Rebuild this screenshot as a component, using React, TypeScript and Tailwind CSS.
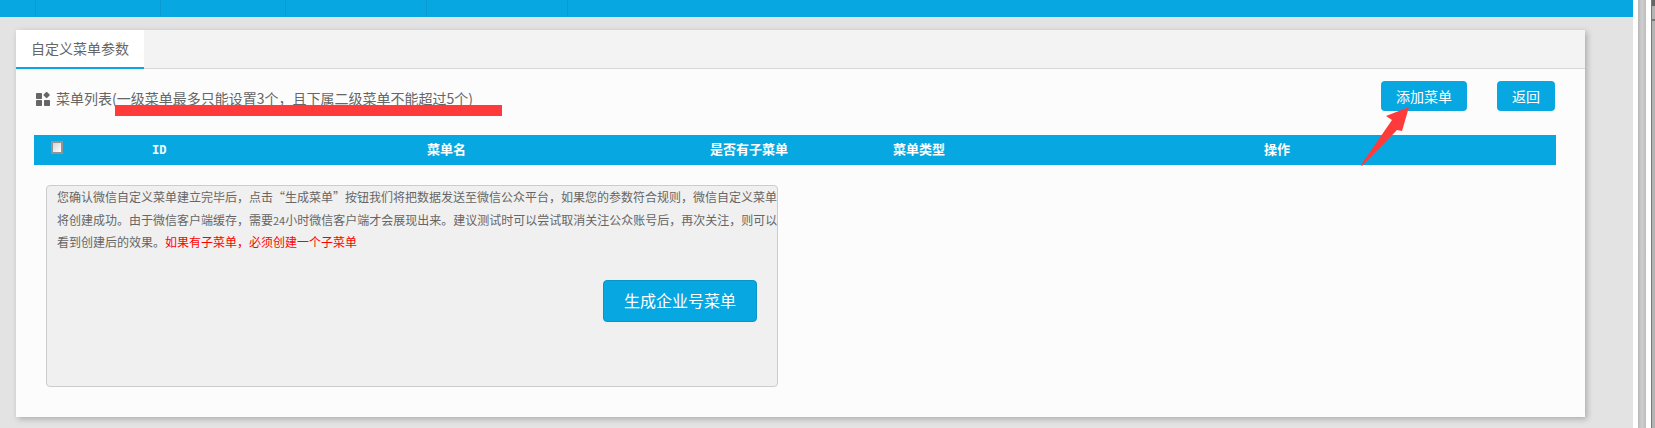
export default function App() {
  const font = { fontFamily: '"Noto Sans CJK SC", "Liberation Sans", sans-serif' };
  return (
    <div className="flex h-[428px] w-[1655px] overflow-hidden bg-white" style={font}>
      <div className="flex w-[1633px] flex-col bg-[#e3e3e3]">
        <div className="flex h-[17px] shrink-0 bg-[#07a8e1]">
          <div className="w-[36px] border-r border-[#0a9bd3]" />
          <div className="w-[125px] border-r border-[#0a9bd3]" />
          <div className="w-[125px] border-r border-[#0a9bd3]" />
          <div className="w-[141px] border-r border-[#0a9bd3]" />
          <div className="w-[141px] border-r border-[#0a9bd3]" />
        </div>
        <div className="ml-[16px] mt-[13px] flex h-[387px] w-[1569px] flex-col bg-[#fcfcfc] shadow-[2px_2px_6px_rgba(0,0,0,0.25)]">
          <div className="flex h-[39px] shrink-0 border-b border-[#d8d8d8] bg-[#f3f3f3]">
            <div className="flex h-[39px] w-[128px] items-center justify-center border-b-2 border-[#07a8e1] bg-white text-[14px] text-[#666]">自定义菜单参数</div>
          </div>
          <div className="relative flex flex-1 flex-col px-[18px]">
            <div className="flex h-[66px] shrink-0 items-start pt-[12px]">
              <div className="flex items-center pt-[7px] text-[14px] text-[#666]">
                <svg width="14" height="14" viewBox="0 0 14 14" className="mr-[6px] ml-[2px]" fill="#666">
                  <rect x="0" y="1" width="6" height="6" rx="0.8" />
                  <rect x="8.2" y="0.6" width="4.8" height="4.8" rx="0.6" transform="rotate(45 10.6 3)" />
                  <rect x="0" y="8" width="6" height="6" rx="0.8" />
                  <rect x="8" y="8" width="6" height="6" rx="0.8" />
                </svg>
                <span>菜单列表(一级菜单最多只能设置3个，且下属二级菜单不能超过5个)</span>
              </div>
              <div className="ml-auto flex gap-[30px] pr-[12px]">
                <button className="h-[30px] w-[86px] rounded-[4px] bg-[#07a8e1] text-[14px] text-white">添加菜单</button>
                <button className="h-[30px] w-[58px] rounded-[4px] bg-[#07a8e1] text-[14px] text-white">返回</button>
              </div>
            </div>
            <div className="flex h-[30px] w-[1522px] shrink-0 items-center bg-[#07a8e1] pb-[2px] text-[13px] font-bold text-white">
              <div className="flex w-[118px] items-start pl-[17px]">
                <input type="checkbox" className="-mt-[4px] h-[13px] w-[12px] appearance-none border-2 border-[#949494] bg-[linear-gradient(135deg,#d4d4d4,#ffffff)]" readOnly />
              </div>
              <div className="mt-[4px] w-[275px] text-[12px] [font-family:'Liberation_Mono',monospace]">ID</div>
              <div className="w-[283px]">菜单名</div>
              <div className="w-[183px]">是否有子菜单</div>
              <div className="w-[371px]">菜单类型</div>
              <div>操作</div>
            </div>
            <div className="ml-[12px] mt-[20px] flex h-[202px] w-[732px] flex-col rounded-[4px] border border-[#ccc] bg-[#f0f0f0] pl-[10px] text-[12px] leading-[22.5px] text-[#666]">
              <p className="whitespace-nowrap">
                您确认微信自定义菜单建立完毕后，点击“生成菜单”按钮我们将把数据发送至微信公众平台，如果您的参数符合规则，微信自定义菜单<br />
                将创建成功。由于微信客户端缓存，需要<span className="text-[11px]">24</span>小时微信客户端才会展现出来。建议测试时可以尝试取消关注公众账号后，再次关注，则可以<br />
                看到创建后的效果。<span className="text-[#f00]">如果有子菜单，必须创建一个子菜单</span>
              </p>
              <div className="mt-[26px] flex justify-end pr-[20px]">
                <button className="h-[42px] w-[154px] rounded-[4px] border border-[#0895c8] bg-[#07a8e1] text-[16px] text-white">生成企业号菜单</button>
              </div>
            </div>
            <div className="absolute left-[99px] top-[36px] h-[11px] w-[387px] bg-[#ff3a3a]" />
            <svg className="absolute left-[1345px] top-[37px]" width="50" height="60" viewBox="0 0 50 60">
              <polygon points="48,1 25,10 31,14 0,59 1,60 36,24 41,25" fill="#ff3a3a" />
            </svg>
          </div>
        </div>
      </div>
      <div className="w-[5px] bg-white" />
      <div className="w-[8px] bg-[linear-gradient(90deg,#b8b8b8,#cfcfcf_50%,#bcbcbc)]" />
      <div className="w-[5px] bg-white" />
      <div className="w-px bg-[#777]" />
      <div className="flex w-[3px] flex-col bg-[#b4b4b4]">
        <div className="h-[6px] bg-[#666]" />
        <div className="mt-[13px] h-[2px] bg-[#777]" />
      </div>
    </div>
  );
}
